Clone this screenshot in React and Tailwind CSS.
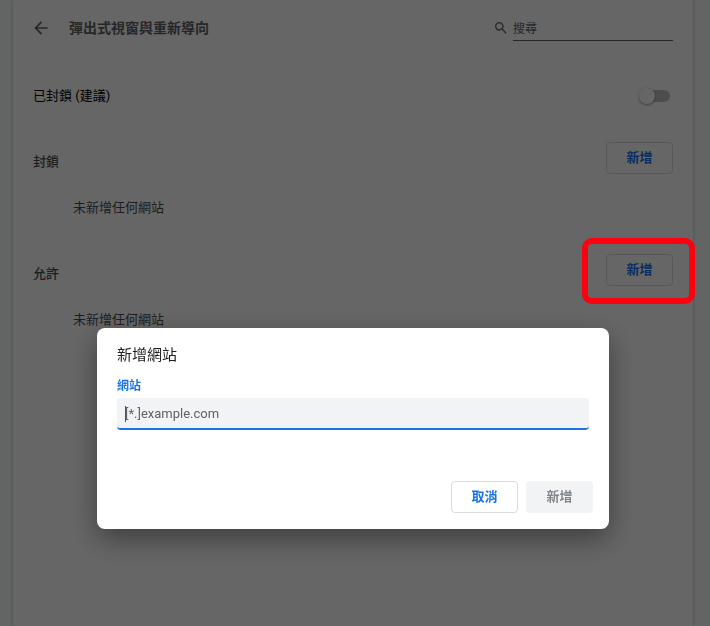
import React from "react";
import { MdArrowBack, MdSearch } from "react-icons/md";

const buttonBase =
  "h-8 w-[67px] rounded border text-[13px] leading-5 font-bold cursor-pointer";

function SiteList({ title, highlight }) {
  return (
    <section className="mb-3">
      <div className="flex h-12 items-center justify-between">
        <h2 className="pt-2 text-[13px] leading-5 font-medium text-[#4a4d51]">
          {title}
        </h2>
        <div className="relative">
          <button
            type="button"
            className={`${buttonBase} block border-[#dadce0] text-[#1a73e8]`}
          >
            新增
          </button>
          {highlight && (
            <span className="pointer-events-none absolute -top-4 -right-[22px] -bottom-[18px] -left-6 z-20 rounded-[10px] border-6 border-[#ff0010]" />
          )}
        </div>
      </div>
      <p className="flex h-13 items-center pl-10 text-[13px] leading-5 text-[#4a4d51]">
        未新增任何網站
      </p>
    </section>
  );
}

function AddSiteDialog() {
  return (
    <div className="fixed inset-0 z-10 flex items-start justify-center bg-black/60 pt-[328px] pr-1">
      <form
        role="dialog"
        aria-labelledby="dialog-title"
        onSubmit={(e) => e.preventDefault()}
        className="w-full max-w-[512px] rounded-lg bg-white pb-4 shadow-[0_10px_28px_rgba(0,0,0,0.4)]"
      >
        <h2
          id="dialog-title"
          className="px-5 pt-[15px] text-[15px] leading-6 text-[#202124]"
        >
          新增網站
        </h2>
        <div className="px-5 pt-[11px]">
          <label
            htmlFor="site"
            className="block text-[12px] leading-4 font-bold text-[#1a73e8]"
          >
            網站
          </label>
          <div className="relative mt-1">
            <input
              id="site"
              type="text"
              placeholder="[*.]example.com"
              className="block h-8 w-full rounded border-b-2 border-[#1a73e8] bg-[#f1f3f4] px-2 text-[13px] text-[#202124] outline-none placeholder:text-[#5f6368]"
            />
            {/* text cursor */}
            <span className="absolute top-2 left-2 h-4 w-px bg-[#1a5bb8]" />
          </div>
        </div>
        <div className="mt-[51px] flex justify-end gap-2 px-4">
          <button
            type="button"
            className={`${buttonBase} border-[#dadce0] text-[#1a73e8]`}
          >
            取消
          </button>
          <button
            type="submit"
            disabled
            className={`${buttonBase} border-[#f1f3f4] bg-[#f1f3f4] text-[#80868b]`}
          >
            新增
          </button>
        </div>
      </form>
    </div>
  );
}

export default function App() {
  return (
    <div className="min-h-screen bg-[#f8faf9] pr-[17px] pl-[13px] font-['Roboto','Noto_Sans_CJK_TC',sans-serif]">
      <main className="min-h-screen bg-white px-5 shadow-[0_0_3px_rgba(60,64,67,0.35)]">
        {/* HEADER */}
        <header className="flex h-14 items-center justify-between">
          <div className="flex items-center gap-[18px]">
            <button type="button" aria-label="返回" className="-ml-0.5 text-[#5f6368]">
              <MdArrowBack size={20} />
            </button>
            <h1 className="text-[14px] leading-5 font-bold text-[#5f6368]">
              彈出式視窗與重新導向
            </h1>
          </div>
          <div className="flex items-center gap-1">
            <MdSearch size={16} className="text-[#5f6368]" />
            <input
              type="search"
              aria-label="搜尋"
              placeholder="搜尋"
              className="mt-0.5 h-6 w-40 border-b border-[#5f6368] text-[12px] outline-none placeholder:text-[#5f6368]"
            />
          </div>
        </header>

        {/* DEFAULT BEHAVIOUR */}
        <div className="mt-4 mb-3.5 flex h-12 items-center justify-between">
          <label
            htmlFor="blocked"
            className="text-[13px] leading-5 text-black"
          >
            已封鎖 (建議)
          </label>
          <input
            id="blocked"
            type="checkbox"
            role="switch"
            className="relative mr-[3px] h-3 w-7 appearance-none rounded-full bg-[#bdc1c6] before:absolute before:-top-0.5 before:-left-[3px] before:size-4 before:rounded-full before:bg-white before:shadow-[0_1px_3px_rgba(0,0,0,0.4)]"
          />
        </div>

        <SiteList title="封鎖" />
        <SiteList title="允許" highlight />
      </main>

      <AddSiteDialog />
    </div>
  );
}
